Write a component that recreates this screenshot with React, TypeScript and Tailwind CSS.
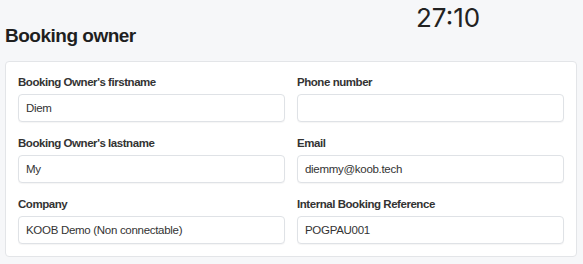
import React from 'react';

interface Field {
  label: string;
  value: string;
}

const fields: Field[] = [
  { label: "Booking Owner's firstname", value: 'Diem' },
  { label: 'Phone number', value: '' },
  { label: "Booking Owner's lastname", value: 'My' },
  { label: 'Email', value: 'diemmy@koob.tech' },
  { label: 'Company', value: 'KOOB Demo (Non connectable)' },
  { label: 'Internal Booking Reference', value: 'POGPAU001' },
];

export default function App() {
  return (
    <div
      className="relative min-h-[264px] bg-[#f6f7f9] pl-[5px] pr-[6px] pt-[22px] text-[#222]"
      style={{ fontFamily: '"Liberation Sans", Arial, sans-serif' }}
    >
      {/* Timer */}
      <div
        className="absolute left-[416px] top-[1px] text-[26px] leading-[34px] font-normal text-[#222]"
        style={{ fontFamily: 'Inter, sans-serif' }}
      >
        27:10
      </div>

      <h2 className="text-[19px] leading-[28px] font-bold tracking-[-0.5px] text-[#1f1f1f]">Booking owner</h2>

      <div className="mt-[11px] rounded-[4px] border border-[#e3e5e8] bg-white p-3">
        <div className="grid grid-cols-2 gap-x-3 gap-y-[13px]">
          {fields.map((f) => (
            <div key={f.label} className="flex flex-col">
              <label className="mb-1 text-[11.5px] leading-4 font-bold tracking-[-0.45px] text-[#333]">{f.label}</label>
              <input
                readOnly
                value={f.value}
                className="h-7 rounded-[4px] border border-[#dfe2e6] bg-white px-[7px] text-[11.5px] tracking-[-0.3px] text-[#333] shadow-[0_1px_1px_rgba(0,0,0,0.04)] outline-none"
                style={{ fontFamily: '"Liberation Sans", Arial, sans-serif' }}
              />
            </div>
          ))}
        </div>
      </div>
    </div>
  );
}
